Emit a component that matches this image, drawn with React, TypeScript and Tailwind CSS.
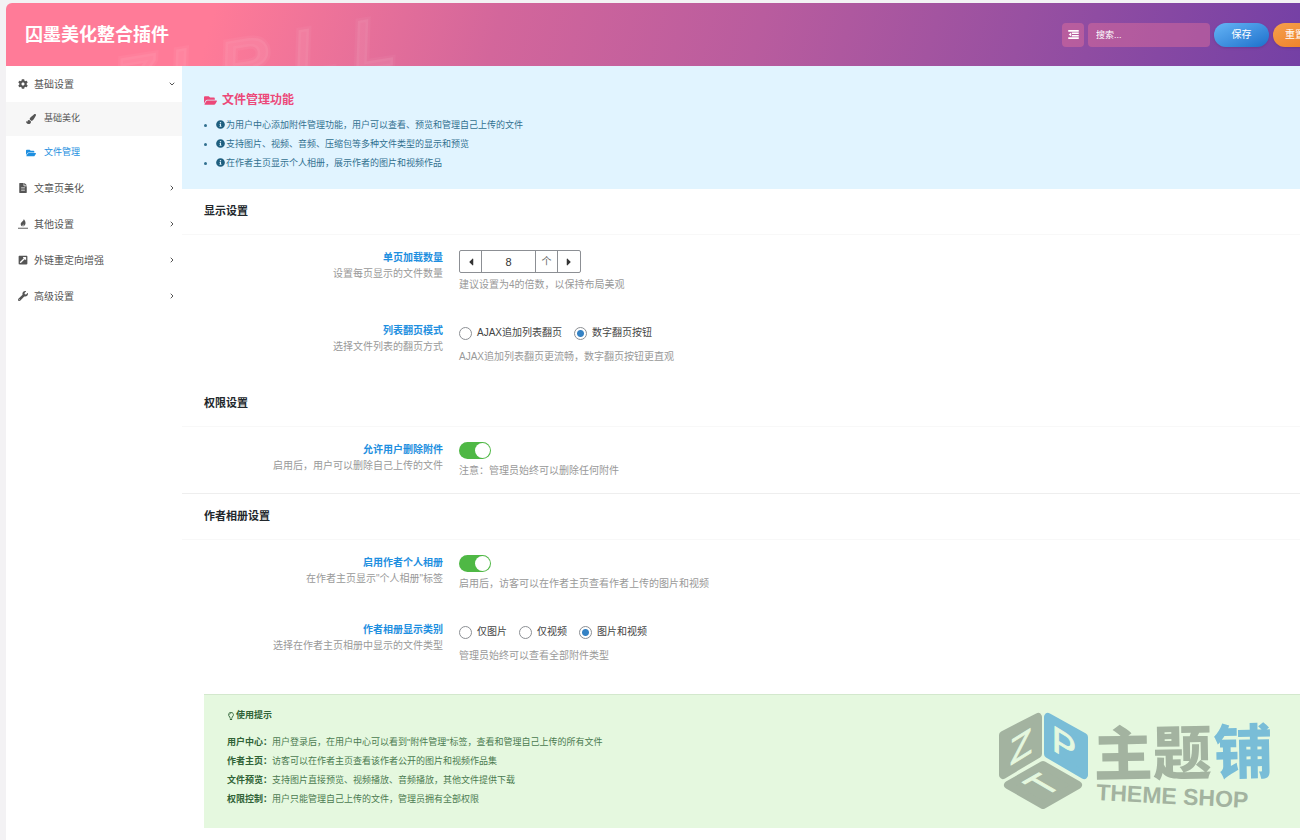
import { useState, type ReactNode } from 'react';
import { ChevronDown, ChevronRight } from 'lucide-react';
import {
  FaCaretLeft,
  FaCaretRight,
  FaCog,
  FaExternalLinkSquareAlt,
  FaFileAlt,
  FaFolderOpen,
  FaInfoCircle,
  FaPaintBrush,
  FaRegLightbulb,
  FaWrench,
} from 'react-icons/fa';

const features = [
  '为用户中心添加附件管理功能，用户可以查看、预览和管理自己上传的文件',
  '支持图片、视频、音频、压缩包等多种文件类型的显示和预览',
  '在作者主页显示个人相册，展示作者的图片和视频作品',
];

const tips = [
  { name: '用户中心：', text: '用户登录后，在用户中心可以看到"附件管理"标签，查看和管理自己上传的所有文件' },
  { name: '作者主页：', text: '访客可以在作者主页查看该作者公开的图片和视频作品集' },
  { name: '文件预览：', text: '支持图片直接预览、视频播放、音频播放，其他文件提供下载' },
  { name: '权限控制：', text: '用户只能管理自己上传的文件，管理员拥有全部权限' },
];

function FlameIcon() {
  return (
    <svg viewBox="0 0 16 16" className="h-[10px] w-[10px]" fill="currentColor" aria-hidden="true">
      <path d="M9.500 0C10 2 12.500 3.500 12 7c-.3 2.300-1.800 4-3.600 5C9 10.500 9 9.500 8.300 8.500 7.800 9.800 7 10.500 7 12 5 11 4 9.300 4.400 7.200 4.900 4.500 8.800 3.500 9.500 0z" />
      <path d="M0 14h16v1.500H0z" />
    </svg>
  );
}

function OutdentIcon() {
  return (
    <svg viewBox="0 0 14 12" className="h-[9px] w-[11px]" fill="currentColor" aria-hidden="true">
      <path d="M0 0h14v2.200H0zM5 3.200h9v2.200H5zM5 6.500h9v2.200H5zM0 9.700h14V12H0zM4 3.200v5.500L.6 6z" />
    </svg>
  );
}

const groups = [
  { label: '文章页美化', icon: <FaFileAlt className="h-[10px] w-[10px]" /> },
  { label: '其他设置', icon: <FlameIcon /> },
  { label: '外链重定向增强', icon: <FaExternalLinkSquareAlt className="h-[10px] w-[10px]" /> },
  { label: '高级设置', icon: <FaWrench className="h-[10px] w-[10px]" /> },
];

function Header() {
  return (
    <header className="relative flex h-[63px] items-center justify-between overflow-hidden rounded-tl-md bg-[linear-gradient(105deg,#ff7b98_0%,#ff7b98_16%,#d3669b_38%,#b95c9e_58%,#9850a1_78%,#7440a5_100%)] pl-[19px]">
      {/* Faint lettering behind the title, rising to the right */}
      <svg viewBox="0 0 300 63" className="absolute bottom-0 left-[112px] h-[63px] w-[300px]" aria-hidden="true">
        <text
          x="0 56 106 180 240"
          y="106"
          transform="rotate(-9 0 106)"
          className="fill-white/7 stroke-white/4 stroke-[5px] text-[72px] font-black italic"
        >
          ZIRLL
        </text>
      </svg>
      <h1 className="relative text-lg font-bold text-white">囚墨美化整合插件</h1>
      <form className="relative -mr-7 flex shrink-0 items-center gap-1" onSubmit={(e) => e.preventDefault()}>
        <button
          type="button"
          aria-label="展开全部"
          className="flex h-6 w-[22px] items-center justify-center rounded-sm bg-[#ff7b98]/35 text-white"
        >
          <OutdentIcon />
        </button>
        <input
          type="search"
          aria-label="搜索"
          placeholder="搜索..."
          className="h-6 w-[122px] rounded-sm bg-[#ff7b98]/35 px-2 text-[9px] text-white outline-none placeholder:text-white"
        />
        <button
          type="submit"
          className="h-6 w-[55px] rounded-full bg-linear-to-br from-[#65b5f6] to-[#1b70cb] text-[10px] text-white shadow"
        >
          保存
        </button>
        <button
          type="reset"
          className="h-6 w-[55px] rounded-full bg-linear-to-br from-[#f5a04c] to-[#ec7a1c] pl-3 text-left text-[10px] text-white shadow"
        >
          重置
        </button>
      </form>
    </header>
  );
}

function Sidebar() {
  return (
    <nav className="w-44 shrink-0 text-[10px] text-[#555]">
      <a href="#basic" className="flex h-9 items-center gap-1.5 pr-1.5 pl-3">
        <FaCog className="h-[10px] w-[10px]" />
        <span className="flex-1">基础设置</span>
        <ChevronDown className="h-2 w-2" strokeWidth={3} />
      </a>
      <a href="#beautify" className="flex h-[34px] items-center gap-2 bg-[#f7f7f7] pl-5 text-[9px]">
        <FaPaintBrush className="h-[10px] w-[10px]" />
        基础美化
      </a>
      <a href="#files" aria-current="page" className="flex h-[34px] items-center gap-2 pl-5 text-[9px] text-[#1e8fe0]">
        <FaFolderOpen className="h-[10px] w-[10px]" />
        文件管理
      </a>
      {groups.map((group) => (
        <a key={group.label} href="#group" className="flex h-9 items-center gap-1.5 pr-1.5 pl-3">
          {group.icon}
          <span className="flex-1">{group.label}</span>
          <ChevronRight className="h-2 w-2" strokeWidth={3} />
        </a>
      ))}
    </nav>
  );
}

function SectionTitle({ children }: { children: ReactNode }) {
  return (
    <h2 className="flex h-[46px] items-center border-b border-[#f8f8f8] px-[22px] text-[11px] font-bold text-[#23282d]">
      {children}
    </h2>
  );
}

type FieldProps = {
  title: string;
  desc: string;
  hint: string;
  children: ReactNode;
};

function Field({ title, desc, hint, children }: FieldProps) {
  return (
    <div role="group" aria-label={title} className="flex gap-4 px-[22px] text-[10px] leading-4">
      <div className="w-[239px] shrink-0 text-right">
        <h3 className="font-bold text-[#1e8fe0]">{title}</h3>
        <p className="text-[#999]">{desc}</p>
      </div>
      <div>
        {children}
        <p className="text-[#999]">{hint}</p>
      </div>
    </div>
  );
}

function Stepper() {
  const [value, setValue] = useState(8);
  return (
    <div className="mb-1 flex h-[23px] w-[122px] divide-x divide-[#8c8f94] rounded-xs border border-[#8c8f94] text-[#333]">
      <button type="button" aria-label="减少" onClick={() => setValue(value - 1)} className="flex w-[22px] items-center justify-center">
        <FaCaretLeft className="h-3 w-3" />
      </button>
      <input
        aria-label="单页加载数量"
        value={value}
        onChange={(e) => setValue(Number(e.target.value))}
        className="w-[54px] text-center text-[11px] outline-none"
      />
      <span className="flex w-[22px] items-center justify-center text-[#666]">个</span>
      <button type="button" aria-label="增加" onClick={() => setValue(value + 1)} className="flex w-[22px] items-center justify-center">
        <FaCaretRight className="h-3 w-3" />
      </button>
    </div>
  );
}

function RadioGroup({ name, options, initial }: { name: string; options: string[]; initial: string }) {
  return (
    <div className="mb-2 flex gap-3 pt-0.5">
      {options.map((option) => (
        <label key={option} className="flex items-center gap-[5px] text-[#444]">
          <input
            type="radio"
            name={name}
            defaultChecked={option === initial}
            className="h-[13px] w-[13px] appearance-none rounded-full border border-[#8c8f94] bg-white checked:bg-[radial-gradient(circle,#3582c4_0_3px,white_4px)]"
          />
          {option}
        </label>
      ))}
    </div>
  );
}

function Toggle({ label }: { label: string }) {
  const [on, setOn] = useState(true);
  return (
    <button
      type="button"
      role="switch"
      aria-checked={on}
      aria-label={label}
      onClick={() => setOn(!on)}
      className={`mb-1 flex h-[17px] w-8 items-center rounded-full px-px ${on ? 'justify-end bg-[#4fb845]' : 'justify-start bg-[#ccc]'}`}
    >
      <span className="h-[15px] w-[15px] rounded-full bg-white" />
    </button>
  );
}

function ShopLogo() {
  return (
    <svg viewBox="0 0 280 102" className="mt-1 h-[102px] w-[280px]" role="img" aria-label="主题铺 THEME SHOP">
      <g strokeLinejoin="round" strokeWidth="8">
        <path d="M40 7v37L5 65V25z" fill="#a3b3a0" stroke="#a3b3a0" />
        <path d="M50 7v37l36 21V27z" fill="#79bdd7" stroke="#79bdd7" />
        <path d="M45 55l35 20-35 20-35-20z" fill="#a3b3a0" stroke="#a3b3a0" />
      </g>
      <g fill="#e5f8df" stroke="#e5f8df" fontSize="36" textAnchor="middle">
        <text transform="translate(23 49) skewY(-32)">Z</text>
        <text transform="translate(66 47) skewY(32)">P</text>
        <text transform="translate(56 81) rotate(-30) skewX(30)" fontSize="34">
          T
        </text>
      </g>
      <g transform="rotate(-1 98 60)" fontSize="59" fontWeight="900">
        <text x="96" y="66" fill="#a3b3a0">主题</text>
        <text x="216" y="66" fill="#79bdd7">铺</text>
      </g>
      <text x="98" y="90" fill="#a3b3a0" fontSize="23" fontWeight="700" transform="rotate(3 98 90)">
        THEME SHOP
      </text>
    </svg>
  );
}

export default function App() {
  return (
    <div className="min-h-screen overflow-hidden bg-[#f3f2f4] pt-[3px] pl-1.5 font-['Liberation_Sans','Noto_Sans_CJK_SC',sans-serif]">
      <Header />
      <div className="flex min-h-[calc(100vh-66px)] bg-white pb-3">
        <Sidebar />
        <main className="min-w-0 flex-1">
          <section className="bg-[#e1f4ff] px-[22px] pt-6 pb-4 text-[9px] text-[#31708f]">
            <h2 className="mb-1.5 flex items-center gap-[5px] text-xs leading-5 font-bold text-[#ec4879]">
              <FaFolderOpen className="h-[13px] w-[13px]" />
              文件管理功能
            </h2>
            <ul className="list-disc pl-3">
              {features.map((feature) => (
                <li key={feature} className="leading-[19px]">
                  <FaInfoCircle className="mr-px inline h-[9px] w-[9px] align-[-1px] text-[#1f5f7f]" />
                  {feature}
                </li>
              ))}
            </ul>
          </section>

          <SectionTitle>显示设置</SectionTitle>
          <div className="flex flex-col gap-[30px] pt-[15px] pb-4">
            <Field title="单页加载数量" desc="设置每页显示的文件数量" hint="建议设置为4的倍数，以保持布局美观">
              <Stepper />
            </Field>
            <Field title="列表翻页模式" desc="选择文件列表的翻页方式" hint="AJAX追加列表翻页更流畅，数字翻页按钮更直观">
              <RadioGroup name="paging" options={['AJAX追加列表翻页', '数字翻页按钮']} initial="数字翻页按钮" />
            </Field>
          </div>

          <SectionTitle>权限设置</SectionTitle>
          <div className="border-b border-[#eee] pt-[15px] pb-[14px]">
            <Field title="允许用户删除附件" desc="启用后，用户可以删除自己上传的文件" hint="注意：管理员始终可以删除任何附件">
              <Toggle label="允许用户删除附件" />
            </Field>
          </div>

          <SectionTitle>作者相册设置</SectionTitle>
          <div className="flex flex-col gap-[30px] pt-[15px] pb-[30px]">
            <Field title="启用作者个人相册" desc={'在作者主页显示"个人相册"标签'} hint="启用后，访客可以在作者主页查看作者上传的图片和视频">
              <Toggle label="启用作者个人相册" />
            </Field>
            <Field title="作者相册显示类别" desc="选择在作者主页相册中显示的文件类型" hint="管理员始终可以查看全部附件类型">
              <RadioGroup name="album" options={['仅图片', '仅视频', '图片和视频']} initial="图片和视频" />
            </Field>
          </div>

          <section className="ml-[22px] flex items-start justify-between border-t border-[#d3e8cd] bg-[#e5f8df] pt-[11px] pr-[22px] pb-4 pl-[23px] text-[9px] leading-[19px] text-[#4b7a50]">
            <div>
              <h2 className="mb-2 flex items-center gap-px font-bold text-[#2f6236]">
                <FaRegLightbulb className="h-2 w-2" />
                使用提示
              </h2>
              {tips.map((tip) => (
                <p key={tip.name}>
                  <strong className="text-[#2f6236]">{tip.name}</strong>
                  {tip.text}
                </p>
              ))}
            </div>
            <ShopLogo />
          </section>
        </main>
      </div>
    </div>
  );
}
